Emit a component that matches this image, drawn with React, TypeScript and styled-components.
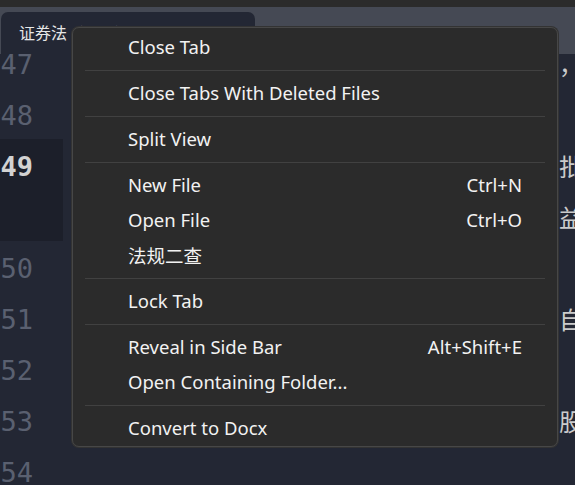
import styled, { createGlobalStyle } from "styled-components";

const GlobalStyle = createGlobalStyle`
  html, body {
    margin: 0;
    padding: 0;
    background: #232734;
    overflow: hidden;
  }
`;

type CodeLine = { no: number; rows: string[]; active?: boolean };

const lines: CodeLine[] = [
  { no: 47, rows: ["证券交易所应当为组织公平集中交易提供保障，公布证券交易即时行情"] },
  { no: 48, rows: [""] },
  {
    no: 49,
    active: true,
    rows: [
      "公开发行证券，必须符合法律规定的条件，经批准后方可发行，未经依法",
      "依法保护投资者的合法权益，维护社会公共利益",
    ],
  },
  { no: 50, rows: [""] },
  { no: 51, rows: ["证券交易所、证券公司和证券登记结算机构应自律管理"] },
  { no: 52, rows: [""] },
  { no: 53, rows: ["发行人申请首次公开发行股票的，应当报送招股说明书"] },
  { no: 54, rows: [""] },
];

type MenuEntry = { label: string; keys?: string } | "sep";

const menu: MenuEntry[] = [
  { label: "Close Tab" },
  "sep",
  { label: "Close Tabs With Deleted Files" },
  "sep",
  { label: "Split View" },
  "sep",
  { label: "New File", keys: "Ctrl+N" },
  { label: "Open File", keys: "Ctrl+O" },
  { label: "法规二查" },
  "sep",
  { label: "Lock Tab" },
  "sep",
  { label: "Reveal in Side Bar", keys: "Alt+Shift+E" },
  { label: "Open Containing Folder..." },
  "sep",
  { label: "Convert to Docx" },
];

export default function App() {
  return (
    <Window>
      <GlobalStyle />
      <TitleBar />
      <TabStrip>
        <Tab>证券法（……）</Tab>
      </TabStrip>
      <Editor>
        <Lines>
          {lines.map((l) => (
            <Line key={l.no}>
              <Gutter $active={!!l.active}>
                <LineNo $active={!!l.active}>{l.no}</LineNo>
              </Gutter>
              <Code>
                {l.active && <Cursor />}
                {l.rows.map((r, i) => (
                  <Row key={i}>{r}</Row>
                ))}
              </Code>
            </Line>
          ))}
        </Lines>
      </Editor>
      <Menu>
        {menu.map((m, i) =>
          m === "sep" ? (
            <Separator key={i} />
          ) : (
            <Item key={i}>
              <span>{m.label}</span>
              {m.keys && <span>{m.keys}</span>}
            </Item>
          )
        )}
      </Menu>
    </Window>
  );
}

const Window = styled.div`
  position: relative;
  width: 575px;
  height: 485px;
  overflow: hidden;
  display: flex;
  flex-direction: column;
  background: #232734;
`;

const TitleBar = styled.div`
  height: 7px;
  background: #2b2b2b;
  flex-shrink: 0;
`;

const TabStrip = styled.div`
  height: 47px;
  flex-shrink: 0;
  background: #454954;
  display: flex;
  align-items: flex-end;
  padding-left: 1px;
`;

const Tab = styled.div`
  width: 254px;
  height: 42px;
  box-sizing: border-box;
  background: #232734;
  border-radius: 7px 7px 0 0;
  padding: 9px 0 0 18px;
  color: #e6e6e6;
  font-family: "Noto Sans CJK SC", "Noto Sans", sans-serif;
  font-size: 16px;
  line-height: 22px;
  white-space: nowrap;
  overflow: hidden;
`;

const Editor = styled.div`
  flex: 1;
  overflow: hidden;
`;

const Lines = styled.div`
  margin-top: -17px;
  display: flex;
  flex-direction: column;
`;

const Line = styled.div`
  display: flex;
`;

const Gutter = styled.div<{ $active: boolean }>`
  width: 63px;
  flex-shrink: 0;
  box-sizing: border-box;
  padding-right: 30px;
  text-align: right;
  background: ${(p) => (p.$active ? "#1c1f2a" : "transparent")};
`;

const LineNo = styled.div<{ $active: boolean }>`
  height: 51px;
  line-height: 56px;
  font-family: "DejaVu Sans Mono", monospace;
  font-size: 27px;
  font-weight: ${(p) => (p.$active ? 700 : 400)};
  color: ${(p) => (p.$active ? "#d2d2d2" : "#5a6070")};
  white-space: nowrap;
  direction: rtl;
`;

const Code = styled.div`
  position: relative;
  flex: 1;
  padding-left: 16px;
`;

const Row = styled.div`
  height: 51px;
  line-height: 53px;
  white-space: nowrap;
  font-family: "Noto Sans CJK SC", sans-serif;
  font-size: 24px;
  color: #cbcbcb;
`;

const Cursor = styled.div`
  position: absolute;
  left: 8px;
  top: 3px;
  width: 2px;
  height: 45px;
  background: #e2b24e;
`;

const Menu = styled.div`
  position: absolute;
  left: 72px;
  top: 27px;
  width: 486px;
  box-sizing: border-box;
  padding: 2px 0 0;
  background: #2b2b2b;
  border: 1px solid #474747;
  border-radius: 7px;
  box-shadow: 0 0 0 1px #333333;
  font-family: "Noto Sans", "Noto Sans CJK SC", sans-serif;
  font-size: 18.5px;
  color: #f2f2f2;
`;

const Item = styled.div`
  height: 35px;
  box-sizing: border-box;
  padding: 0 35px 2px 55px;
  display: flex;
  align-items: center;
  justify-content: space-between;
  white-space: nowrap;
`;

const Separator = styled.div`
  height: 1px;
  margin: 5px 12px;
  background: #414141;
`;
